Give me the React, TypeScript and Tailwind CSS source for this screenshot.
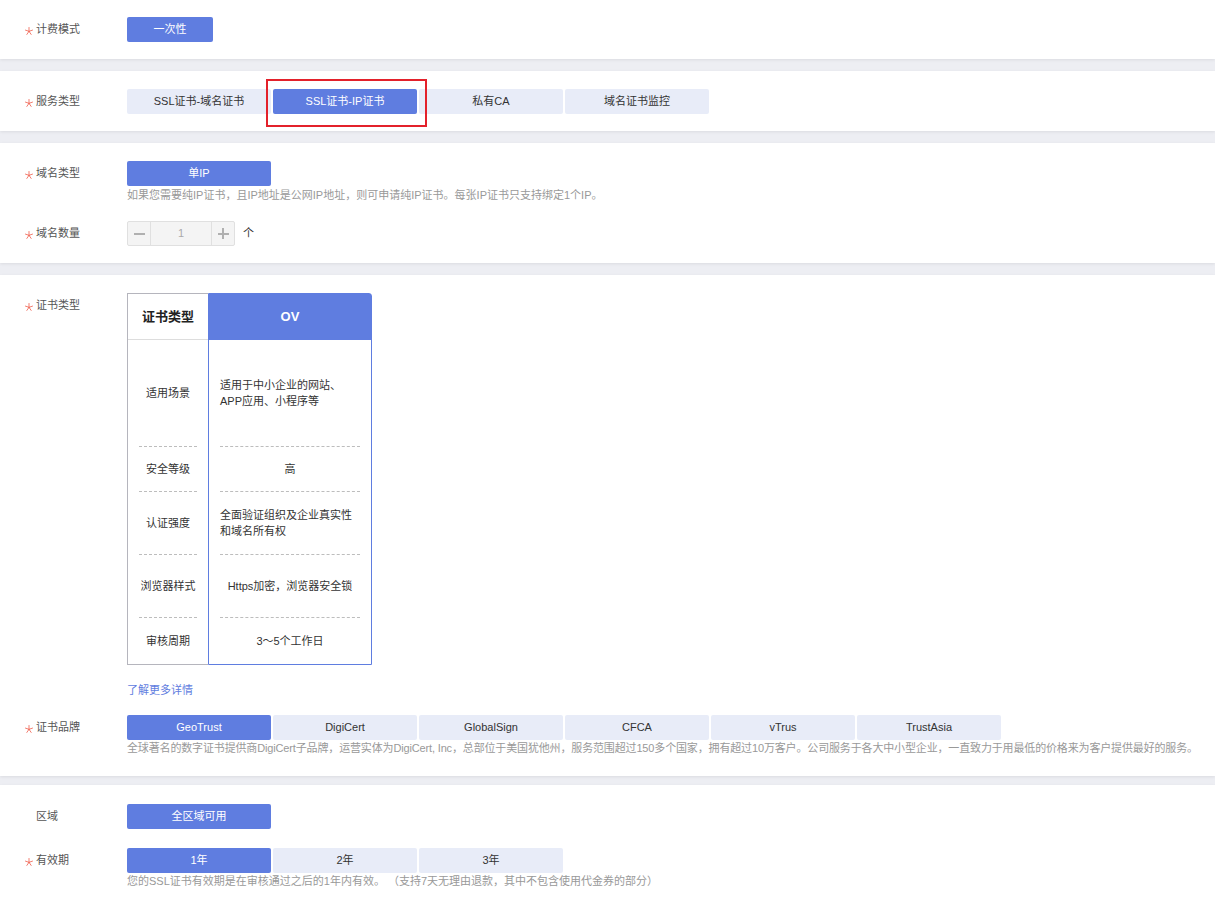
import React from "react";

const PRIMARY = "bg-[#5f7de0] text-white";
const IDLE = "bg-[#e8ecf8] text-[#333]";

function Star({ show = true }: { show?: boolean }) {
  return (
    <span className={`w-[11px] h-[25px] flex items-center ${show ? "" : "invisible"}`}>
      <svg width="8" height="8" viewBox="0 0 10 10" className="mt-[2px]">
        <path
          d="M5 5.4 L5 0.6 M5 5.4 L9.4 3.9 M5 5.4 L7.7 9.3 M5 5.4 L2.3 9.3 M5 5.4 L0.6 3.9"
          fill="none"
          stroke="#f06b5b"
          strokeWidth="1.1"
          strokeLinecap="round"
        />
      </svg>
    </span>
  );
}

function Label({ text, star = true }: { text: string; star?: boolean }) {
  return (
    <div className="w-[127px] shrink-0 pl-[25px] h-[25px] flex items-center text-[11px] text-[#555]">
      <Star show={star} />
      <span>{text}</span>
    </div>
  );
}

function Tab({ text, active }: { text: string; active?: boolean }) {
  return (
    <div
      className={`w-[144px] h-[25px] flex items-center justify-center rounded-[2px] text-[11px] ${
        active ? PRIMARY : IDLE
      }`}
    >
      {text}
    </div>
  );
}

function Card({ children, className = "" }: { children: React.ReactNode; className?: string }) {
  return (
    <div className={`bg-white shadow-[0_1px_3px_rgba(0,0,0,0.08)] ${className}`}>{children}</div>
  );
}

function Dash() {
  return <div className="mx-[11px] border-t border-dashed border-[#bdbdbd]" />;
}

export default function App() {
  const rows = [
    { h: "h-[106px]", left: "适用场景", right: "适用于中小企业的网站、\nAPP应用、小程序等", align: "left" },
    { h: "h-[44px]", left: "安全等级", right: "高", align: "center" },
    { h: "h-[62px]", left: "认证强度", right: "全面验证组织及企业真实性\n和域名所有权", align: "left" },
    { h: "h-[62px]", left: "浏览器样式", right: "Https加密，浏览器安全锁", align: "center" },
    { h: "h-[46px]", left: "审核周期", right: "3～5个工作日", align: "center" },
  ];

  return (
    <div className="min-h-[901px] bg-[#edeef3] font-['Liberation_Sans','Noto_Sans_CJK_SC',sans-serif] text-[11px] text-[#333]">
      {/* Card 1 */}
      <Card className="pt-[17px] pb-[17px] mb-[12px]">
        <div className="flex">
          <Label text="计费模式" />
          <div className="w-[86px] h-[25px] flex items-center justify-center rounded-[2px] bg-[#5f7de0] text-white">
            一次性
          </div>
        </div>
      </Card>

      {/* Card 2 */}
      <Card className="pt-[18px] pb-[17px] mb-[12px]">
        <div className="flex">
          <Label text="服务类型" />
          <div className="flex gap-[2px]">
            <Tab text="SSL证书-域名证书" />
            <div className="relative">
              <Tab text="SSL证书-IP证书" active />
              <div className="absolute -left-[7px] -top-[10px] w-[161px] h-[48px] border-2 border-[#e3212b] pointer-events-none" />
            </div>
            <Tab text="私有CA" />
            <Tab text="域名证书监控" />
          </div>
        </div>
      </Card>

      {/* Card 3 */}
      <Card className="pt-[18px] pb-[17px] mb-[12px]">
        <div className="flex">
          <Label text="域名类型" />
          <div>
            <div className="w-[144px] h-[25px] flex items-center justify-center rounded-[2px] bg-[#5f7de0] text-white">
              单IP
            </div>
            <div className="mt-[1px] leading-[16px] text-[#999]">
              如果您需要纯IP证书，且IP地址是公网IP地址，则可申请纯IP证书。每张IP证书只支持绑定1个IP。
            </div>
          </div>
        </div>
        <div className="flex mt-[18px]">
          <Label text="域名数量" />
          <div className="flex items-center">
            <div className="flex h-[25px] w-[108px] border border-[#e0e0e0] rounded-[2px] bg-[#f4f4f4]">
              <div className="w-[23px] flex items-center justify-center border-r border-[#e0e0e0]">
                <div className="w-[11px] h-[2px] bg-[#b0b0b0]" />
              </div>
              <div className="flex-1 flex items-center justify-center text-[#aaa]">1</div>
              <div className="w-[23px] flex items-center justify-center border-l border-[#e0e0e0] relative">
                <div className="w-[11px] h-[2px] bg-[#b0b0b0]" />
                <div className="absolute w-[2px] h-[11px] bg-[#b0b0b0]" />
              </div>
            </div>
            <span className="ml-[8px] text-[#333]">个</span>
          </div>
        </div>
      </Card>

      {/* Card 4 */}
      <Card className="pt-[18px] pb-[20px] mb-[9px]">
        <div className="flex">
          <div className="w-[127px] shrink-0 pl-[25px] h-[25px] flex items-center text-[#555]">
            <Star />
            <span>证书类型</span>
          </div>
          <div>
            <div className="flex">
              {/* left column */}
              <div className="w-[81px] border border-r-0 border-[#b5b5bd] flex flex-col">
                <div className="h-[46px] flex items-center justify-center text-[13px] font-bold text-[#222] border-b border-[#ddd]">
                  证书类型
                </div>
                {rows.map((r, i) => (
                  <div key={i} className="flex flex-col">
                    {i > 0 && <Dash />}
                    <div className={`${r.h} flex items-center justify-center text-[#333]`}>{r.left}</div>
                  </div>
                ))}
              </div>
              {/* right column */}
              <div className="w-[164px] border border-[#5f7de0] rounded-tr-[3px] flex flex-col">
                <div className="h-[46px] flex items-center justify-center text-[13px] font-bold text-white bg-[#5f7de0]">
                  OV
                </div>
                {rows.map((r, i) => (
                  <div key={i} className="flex flex-col">
                    {i > 0 && <Dash />}
                    <div
                      className={`${r.h} flex items-center px-[11px] leading-[16px] whitespace-pre-line text-[#333] ${
                        r.align === "center" ? "justify-center text-center" : "justify-start"
                      }`}
                    >
                      {r.right}
                    </div>
                  </div>
                ))}
              </div>
            </div>
            <div className="mt-[17px] text-[#5f7de0] leading-[16px]">了解更多详情</div>
          </div>
        </div>
        <div className="flex mt-[17px]">
          <Label text="证书品牌" />
          <div>
            <div className="flex gap-[2px]">
              <Tab text="GeoTrust" active />
              <Tab text="DigiCert" />
              <Tab text="GlobalSign" />
              <Tab text="CFCA" />
              <Tab text="vTrus" />
              <Tab text="TrustAsia" />
            </div>
            <div className="leading-[16px] text-[#999] whitespace-nowrap tracking-[-0.15px]">
              全球著名的数字证书提供商DigiCert子品牌，运营实体为DigiCert, Inc，总部位于美国犹他州，服务范围超过150多个国家，拥有超过10万客户。公司服务于各大中小型企业，一直致力于用最低的价格来为客户提供最好的服务。
            </div>
          </div>
        </div>
      </Card>

      {/* Card 5 */}
      <Card className="pt-[19px] pb-[20px]">
        <div className="flex">
          <Label text="区域" star={false} />
          <div className="w-[144px] h-[25px] flex items-center justify-center rounded-[2px] bg-[#5f7de0] text-white">
            全区域可用
          </div>
        </div>
        <div className="flex mt-[19px]">
          <Label text="有效期" />
          <div>
            <div className="flex gap-[2px]">
              <Tab text="1年" active />
              <Tab text="2年" />
              <Tab text="3年" />
            </div>
            <div className="leading-[16px] text-[#999]">
              您的SSL证书有效期是在审核通过之后的1年内有效。 （支持7天无理由退款，其中不包含使用代金券的部分）
            </div>
          </div>
        </div>
      </Card>
    </div>
  );
}
